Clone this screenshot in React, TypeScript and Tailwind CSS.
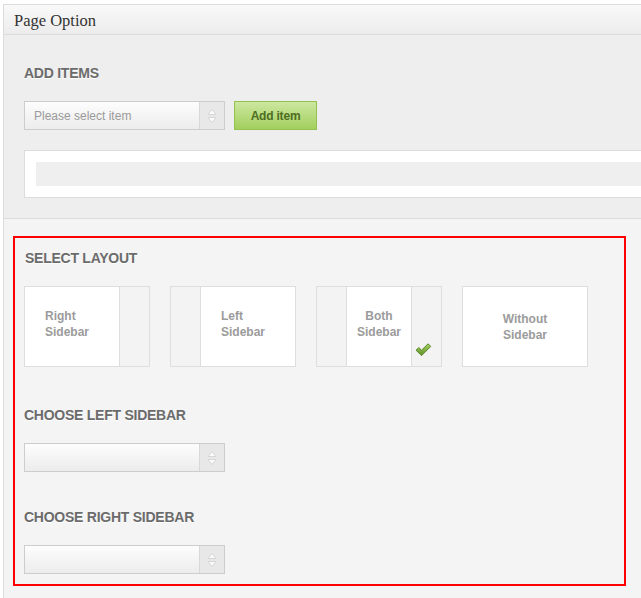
import React from "react";

const headFont = { fontFamily: '"Liberation Sans", Arial, sans-serif' };

function Heading({ children, className = "" }: { children: React.ReactNode; className?: string }) {
  return (
    <div
      className={`text-[14px] leading-[16px] font-bold tracking-[-0.25px] text-[#6b6b6b] [text-shadow:0_1px_0_#ffffff] ${className}`}
    >
      {children}
    </div>
  );
}

function Arrows() {
  return (
    <svg width="10" height="16" viewBox="0 0 10 16">
      <path d="M5 1.5 L9 6.5 L1 6.5 Z" fill="#fbfbfb" stroke="#cfcfcf" strokeWidth="0.8" />
      <path d="M5 14.5 L9 9.5 L1 9.5 Z" fill="#fbfbfb" stroke="#cfcfcf" strokeWidth="0.8" />
    </svg>
  );
}

function Select({ placeholder }: { placeholder?: string }) {
  return (
    <div className="flex h-[29px] w-[201px] border border-[#cdcdcd] bg-gradient-to-b from-[#fdfdfd] to-[#ececec]">
      <div className="flex flex-1 items-center pl-[9px] text-[12px] text-[#9a9a9a]">{placeholder}</div>
      <div className="flex w-[25px] items-center justify-center border-l border-[#d8d8d8] bg-[#e8e8e8]">
        <Arrows />
      </div>
    </div>
  );
}

function Check() {
  return (
    <svg width="17" height="14" viewBox="0 0 17 14">
      <defs>
        <linearGradient id="ck" x1="0" y1="0" x2="0" y2="1">
          <stop offset="0" stopColor="#a6d162" />
          <stop offset="1" stopColor="#5f9126" />
        </linearGradient>
      </defs>
      <path
        d="M1 7.2 L3.8 4.6 L6.6 7.2 L13 0.8 L15.8 3.4 L6.6 12.6 Z"
        fill="url(#ck)"
        stroke="#557f22"
        strokeWidth="0.9"
        strokeLinejoin="round"
      />
    </svg>
  );
}

const boxText = "text-[12px] leading-[16px] font-bold text-[#9b9b9b]";

export default function App() {
  return (
    <div className="h-[598px] w-[641px] overflow-hidden bg-white pl-[3px] pt-[4px]" style={headFont}>
      <div className="flex h-full flex-col overflow-hidden border-l border-t border-[#dcdcdc] bg-[#f4f4f4]">
        {/* header */}
        <div className="flex h-[30px] items-center border-b border-[#dcdcdc] bg-gradient-to-b from-[#f9f9f9] to-[#ececec] pl-[10px] pt-[3px]">
          <span
            className="text-[16.5px] text-[#333333]"
            style={{ fontFamily: '"Liberation Serif", "Times New Roman", serif' }}
          >
            Page Option
          </span>
        </div>

        {/* add items */}
        <div className="border-b border-[#dcdcdc] bg-[#eeeeee] pb-[20px] pl-[20px] pt-[30px]">
          <Heading>ADD ITEMS</Heading>
          <div className="mt-[20px] flex gap-[9px]">
            <Select placeholder="Please select item" />
            <button className="h-[29px] w-[83px] border border-[#95c150] bg-gradient-to-b from-[#cde79f] to-[#a2cf5c] text-[12px] font-bold tracking-[-0.2px] text-[#4e6d22]">
              Add item
            </button>
          </div>
          <div className="-mr-[40px] mt-[20px] border border-[#dcdcdc] bg-white p-[11px]">
            <div className="h-[24px] bg-[#efefef]" />
          </div>
        </div>

        {/* layout */}
        <div className="pl-[9px] pt-[17px]">
          <div className="h-[350px] w-[613px] border-2 border-[#ff0000] pl-[9px] pt-[12px]">
            <Heading className="ml-[1px]">SELECT LAYOUT</Heading>
            <div className="mt-[20px] flex gap-[20px]">
              {/* right sidebar */}
              <div className="flex h-[81px] w-[126px] border border-[#dedede] bg-white">
                <div className={`flex flex-1 flex-col justify-center pb-[6px] pl-[20px] ${boxText}`}>
                  <span>Right</span>
                  <span>Sidebar</span>
                </div>
                <div className="w-[30px] border-l border-[#dedede] bg-[#f3f3f3]" />
              </div>
              {/* left sidebar */}
              <div className="flex h-[81px] w-[126px] border border-[#dedede] bg-white">
                <div className="w-[30px] border-r border-[#dedede] bg-[#f3f3f3]" />
                <div className={`flex flex-1 flex-col justify-center pb-[6px] pl-[20px] ${boxText}`}>
                  <span>Left</span>
                  <span>Sidebar</span>
                </div>
              </div>
              {/* both */}
              <div className="flex h-[81px] w-[126px] border border-[#dedede] bg-white">
                <div className="w-[30px] border-r border-[#dedede] bg-[#f3f3f3]" />
                <div className={`flex flex-1 flex-col items-center justify-center pb-[6px] ${boxText}`}>
                  <span>Both</span>
                  <span>Sidebar</span>
                </div>
                <div className="relative w-[30px] border-l border-[#dedede] bg-[#f3f3f3]">
                  <div className="absolute left-[3px] top-[56px]">
                    <Check />
                  </div>
                </div>
              </div>
              {/* without */}
              <div
                className={`flex h-[81px] w-[126px] flex-col items-center justify-center border border-[#dedede] bg-white ${boxText}`}
              >
                <span>Without</span>
                <span>Sidebar</span>
              </div>
            </div>

            <Heading className="mt-[40px]">CHOOSE LEFT SIDEBAR</Heading>
            <div className="mt-[20px]">
              <Select />
            </div>

            <Heading className="mt-[37px]">CHOOSE RIGHT SIDEBAR</Heading>
            <div className="mt-[20px]">
              <Select />
            </div>
          </div>
        </div>
      </div>
    </div>
  );
}
